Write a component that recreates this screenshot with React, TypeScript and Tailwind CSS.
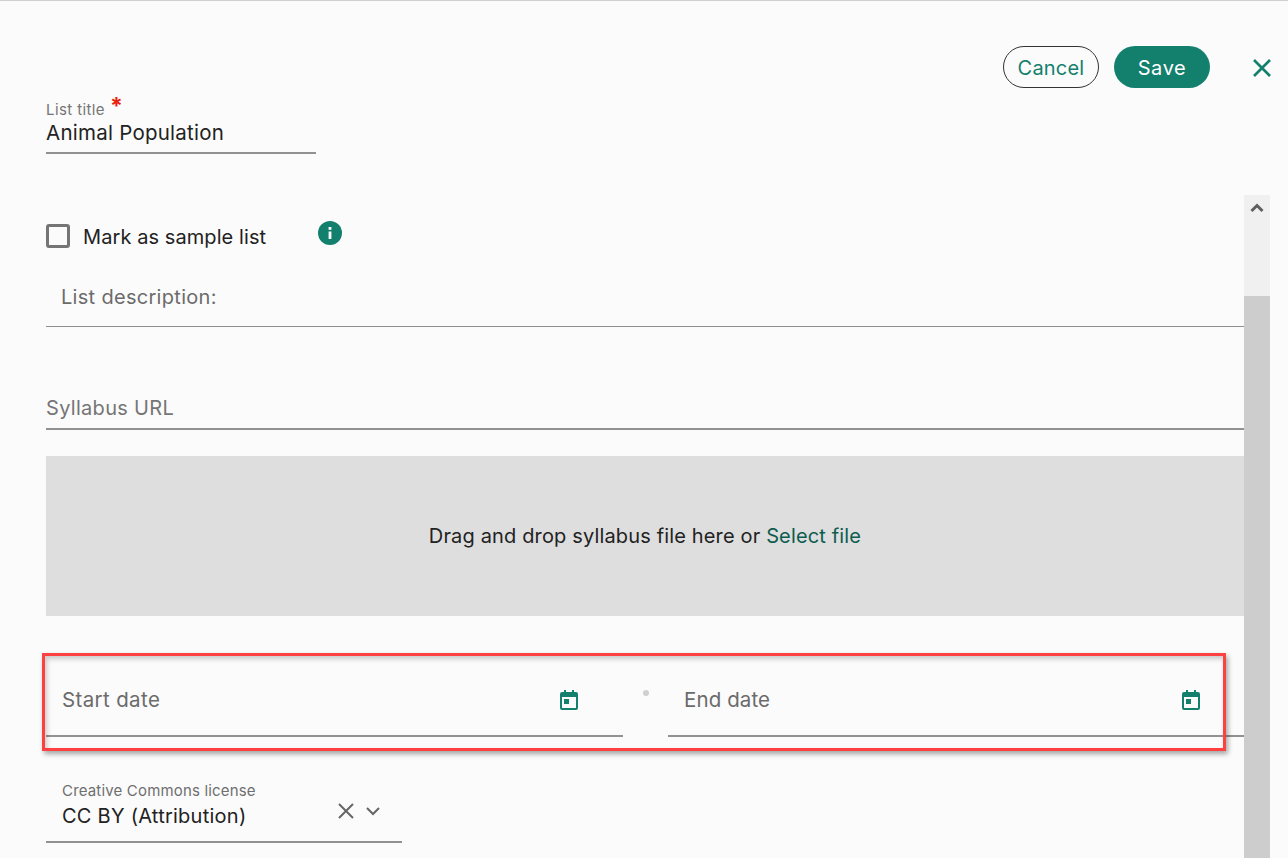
import React from "react";

const font = { fontFamily: "Inter, Roboto, 'Liberation Sans', sans-serif" };

function Calendar() {
  return (
    <svg width="24" height="24" viewBox="0 0 24 24" fill="#13806d" className="shrink-0">
      <path d="M7 2h2v2h6V2h2v2h2a2 2 0 0 1 2 2v14a2 2 0 0 1-2 2H5a2 2 0 0 1-2-2V6a2 2 0 0 1 2-2h2V2zM5 9v11h14V9H5z" />
      <rect x="7" y="11" width="5" height="5" />
    </svg>
  );
}

function DateField({ label, width, iconGap, tracking }: { label: string; width: string; iconGap: string; tracking: string }) {
  return (
    <div className={`${width} h-[85px] pt-[36px] border-b-2 border-[#919191]`}>
      <div className="flex items-center pl-[16px] h-[24px]">
        <span className={`text-[20.5px] leading-[24px] text-[#6b6b6b] ${tracking}`}>{label}</span>
        <div className="flex-1" />
        <div className={iconGap}>
          <Calendar />
        </div>
      </div>
    </div>
  );
}

export default function App() {
  return (
    <div
      style={font}
      className="relative w-[1288px] h-[858px] overflow-hidden bg-[#fbfbfb] border-t border-[#cfcfcf]"
    >
      {/* Header actions */}
      <div className="flex items-center justify-end h-[42px] mt-[45px] pr-[16px]">
        <button className="w-[96px] h-[42px] pt-[1px] rounded-full border border-[#333] text-[20px] tracking-[0.2px] text-[#13806d]">Cancel</button>
        <button className="w-[96px] h-[42px] pt-[1px] ml-[15px] rounded-full bg-[#13806d] text-[20px] tracking-[0.6px] text-white">Save</button>
        <svg width="20" height="20" viewBox="0 0 20 20" className="ml-[42px] mt-[2px]" stroke="#13806d" strokeWidth="2.6" fill="none">
          <path d="M2 2l16 16M18 2L2 18" />
        </svg>
      </div>

      {/* List title */}
      <div className="ml-[46px] mt-[9px] w-[270px] h-[57px] border-b-2 border-[#919191]">
        <div className="flex h-[24px] items-start">
          <span className="text-[15px] leading-[24px] tracking-[0.4px] text-[#757575] mt-[1px]">List title</span>
          <span className="ml-[5px] -mt-[3px] text-[23px] leading-[24px] font-bold text-[#e8200c]">*</span>
        </div>
        <div className="text-[20.5px] leading-[24px] tracking-[0.25px] text-[#222]">Animal Population</div>
      </div>

      {/* Scroll panel */}
      <div className="relative flex mt-[41px] h-[664px]">
        <div className="flex-none w-[1244px] pl-[46px]">
          <div className="flex items-center h-[24px] mt-[29px]">
            <div className="w-[24px] h-[24px] rounded-[3px] border-[3px] border-[#757575]" />
            <span className="ml-[13px] w-[235px] pt-[2px] text-[20px] leading-[24px] tracking-[0.08px] text-[#222]">Mark as sample list</span>
            <svg width="24" height="24" viewBox="0 0 24 24" className="-mt-[7px]">
              <circle cx="12" cy="12" r="12" fill="#13806d" />
              <rect x="10.6" y="10.5" width="2.8" height="7.5" fill="#fff" />
              <rect x="10.6" y="6" width="2.8" height="2.8" fill="#fff" />
            </svg>
          </div>

          <div className="mt-[26px] h-[53px] border-b border-[#8f8f8f] pl-[15px] pt-[11px]">
            <span className="block text-[20px] leading-[24px] tracking-[0.3px] text-[#6b6b6b]">List description:</span>
          </div>

          <div className="mt-[69px] h-[34px] border-b-2 border-[#919191]">
            <span className="text-[20px] leading-[24px] tracking-[0.3px] text-[#757575]">Syllabus URL</span>
          </div>

          <div className="mt-[26px] h-[160px] bg-[#dedede] flex items-center justify-center">
            <span className="text-[20px] tracking-[0.15px] text-[#222]">
              Drag and drop syllabus file here or <span className="text-[#0d5c4e]">Select file</span>
            </span>
          </div>

          <div className="flex items-start mt-[36px]">
            <DateField label="Start date" width="w-[577px]" iconGap="mr-[42px]" tracking="tracking-[0.37px]" />
            <div className="w-[45px] flex justify-center pt-[38px]">
              <div className="w-[6px] h-[6px] rounded-full bg-[#cfcfcf]" />
            </div>
            <DateField label="End date" width="w-[576px]" iconGap="mr-[41px]" tracking="tracking-[0.1px]" />
          </div>

          <div className="mt-[43px] w-[356px] h-[63px] border-b-2 border-[#919191] pl-[16px] pt-[1px]">
            <div className="text-[15px] leading-[20px] tracking-[0.17px] text-[#6f6f6f]">Creative Commons license</div>
            <div className="flex items-center mt-[3px] h-[24px]">
              <span className="w-[275px] text-[20px] leading-[24px] tracking-[0.25px] text-[#222]">CC BY (Attribution)</span>
              <svg width="18" height="18" viewBox="0 0 18 18" className="-mt-[11px]" stroke="#666" strokeWidth="2" fill="none">
                <path d="M2 2l14 14M16 2L2 16" />
              </svg>
              <svg width="16" height="10" viewBox="0 0 16 10" className="ml-[10px] -mt-[11px]" stroke="#666" strokeWidth="2" fill="none">
                <path d="M2 2l6 6 6-6" />
              </svg>
            </div>
          </div>
        </div>

        {/* Scrollbar */}
        <div className="w-[26px] h-full bg-[#f0f0f0] flex flex-col">
          <div className="h-[101px] flex justify-center pt-[7px]">
            <svg width="14" height="11" viewBox="0 0 14 11" fill="none" stroke="#5f5f5f" strokeWidth="3">
              <path d="M1.5 9L7 3.5 12.5 9" />
            </svg>
          </div>
          <div className="flex-1 bg-[#cdcdcd]" />
        </div>
      </div>

      {/* Annotation highlight */}
      <div className="absolute left-[42px] top-[652px] w-[1184px] h-[98px] border-[3px] border-[#ff4040] shadow-[2px_3px_5px_rgba(0,0,0,0.35),inset_2px_3px_5px_rgba(0,0,0,0.2)] pointer-events-none" />
    </div>
  );
}
